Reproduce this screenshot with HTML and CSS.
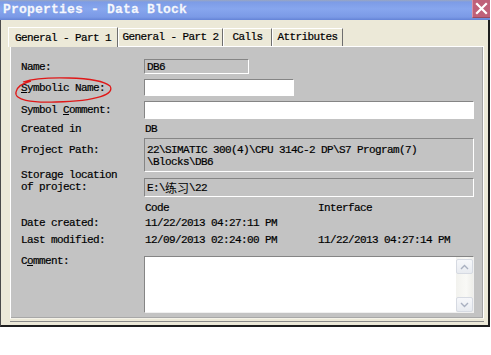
FILE: index.html
```html
<!DOCTYPE html>
<html lang="en">
<head>
<meta charset="UTF-8">
<title>Properties - Data Block</title>
<link rel="stylesheet" href="styles.css">
</head>
<body>
  <div class="window">
    <div class="titlebar">
      <div class="title">Properties - Data Block</div>
      <div class="close">
        <svg width="17" height="17" viewBox="0 0 17 17">
          <path d="M4 4 L13 13 M13 4 L4 13" stroke="#fff" stroke-width="2.2" stroke-linecap="square"/>
        </svg>
      </div>
    </div>
    <div class="frame">
      <div class="sheet">
        <div class="tabs">
          <div class="tab active w1">General - Part 1</div>
          <div class="tab w2">General - Part 2</div>
          <div class="tab w3">Calls</div>
          <div class="tab w4">Attributes</div>
        </div>
        <div class="panel">
          <svg class="mark" width="100" height="30" viewBox="0 0 100 30">
            <path d="M10 6 C28 0, 85 0, 97 10 C102 18, 85 25, 43 26 C18 27, 1 24, 3 16 C4 11, 10 7, 18 5" fill="none" stroke="#e01818" stroke-width="1.3"/>
          </svg>

          <div class="row r-name">
            <div class="label">Name:</div>
            <div class="field gray short">DB6</div>
          </div>
          <div class="row r-sym">
            <div class="label"><u>S</u>ymbolic Name:</div>
            <div class="field white mid"></div>
          </div>
          <div class="row r-comm">
            <div class="label">Symbol <u>C</u>omment:</div>
            <div class="field white full"></div>
          </div>
          <div class="row r-created">
            <div class="label">Created in</div>
            <div class="value">DB</div>
          </div>
          <div class="row r-path">
            <div class="label top">Project Path:</div>
            <div class="field gray full multi">22\SIMATIC 300(4)\CPU 314C-2 DP\S7 Program(7)<br>\Blocks\DB6</div>
          </div>
          <div class="row r-store">
            <div class="label two">Storage location<br>of project:</div>
            <div class="field gray full store">E:\<span class="cjk">练习</span>\22</div>
          </div>
          <div class="row r-code">
            <div class="label"></div>
            <div class="value cols"><span class="c1">Code</span><span>Interface</span></div>
          </div>
          <div class="row r-date">
            <div class="label">Date created:</div>
            <div class="value cols"><span class="c1">11/22/2013 04:27:11 PM</span><span></span></div>
          </div>
          <div class="row r-mod">
            <div class="label">Last modified:</div>
            <div class="value cols"><span class="c1">12/09/2013 02:24:00 PM</span><span>11/22/2013 04:27:14 PM</span></div>
          </div>
          <div class="row r-cmt">
            <div class="label cmt">C<u>o</u>mment:</div>
            <div class="textarea">
              <div class="scroll">
                <div class="sbtn">
                  <svg width="9" height="6" viewBox="0 0 9 6"><path d="M1 5 L4.5 1.5 L8 5" fill="none" stroke="#a9b0c0" stroke-width="1.4"/></svg>
                </div>
                <div class="sbtn">
                  <svg width="9" height="6" viewBox="0 0 9 6"><path d="M1 1 L4.5 4.5 L8 1" fill="none" stroke="#a9b0c0" stroke-width="1.4"/></svg>
                </div>
              </div>
            </div>
          </div>
        </div>
      </div>
    </div>
  </div>
</body>
</html>
```

FILE: styles.css
```css
body {
  margin: 0;
  background: #fff;
  font-family: "Liberation Mono", "DejaVu Sans Mono", monospace;
  font-size: 11px;
  letter-spacing: -0.6px;
  color: #000;
  -webkit-text-stroke: 0.2px #000;
}

.window {
  width: 491px;
}

.titlebar {
  height: 20px;
  width: 490px;
  display: flex;
  justify-content: space-between;
  align-items: flex-start;
  background: linear-gradient(180deg, #9aa6c0 0, #7d9ce6 2px, #87a6ee 45%, #7b9ae6 85%, #6483d6 100%);
}

.title {
  padding: 2px 0 0 3px;
  font-size: 13px;
  font-weight: bold;
  letter-spacing: 0.2px;
  line-height: 16px;
  color: #f4f7ff;
  -webkit-text-stroke: 0.3px #f4f7ff;
  text-shadow: 0 0 1px #5a78c8;
}

.close {
  width: 17px;
  height: 17px;
  background: #bf6079;
  border-left: 1px solid #d890a4;
  border-bottom: 1px solid #9a4a62;
}

.close svg {
  display: block;
}

.frame {
  box-sizing: border-box;
  width: 490px;
  height: 307px;
  background: #ece9d8;
  border-left: 1px solid #4a4a4a;
  border-right: 2px solid #1e1e1e;
  border-bottom: 2px solid #1e1e1e;
  padding: 7px 4px 3px 9px;
}

.sheet {
  border-bottom: 1px solid #8a8a8a;
  padding-bottom: 2px;
}

.tabs {
  display: flex;
  align-items: flex-end;
  height: 19px;
  margin-left: -2px;
}

.tab {
  box-sizing: border-box;
  height: 18px;
  line-height: 17px;
  text-align: center;
  background: #ece9d8;
  border-top: 1px solid #fff;
  border-left: 1px solid #fff;
  border-right: 1px solid #6e6e6e;
  position: relative;
}

.tab.active {
  height: 20px;
  line-height: 20px;
  margin-bottom: -1px;
  z-index: 1;
}

.w1 { width: 110px; }
.w2 { width: 105px; }
.w3 { width: 49px; }
.w4 { width: 71px; }

.panel {
  box-sizing: border-box;
  height: 273px;
  background: #c3c3c3;
  border-top: 1px solid #fff;
  border-left: 1px solid #fff;
  border-right: 1px solid #fff;
  border-bottom: 1px solid #f4f2e8;
  box-shadow: inset -1px 0 #a4a4a4, inset 0 -1px #a8a8a8;
  padding: 0 8px 0 10px;
  position: relative;
}

.mark {
  position: absolute;
  left: 2px;
  top: 29px;
}

.row {
  display: flex;
  align-items: center;
}

.label {
  width: 123px;
  flex: none;
  line-height: 12px;
  white-space: nowrap;
}

.label u {
  text-underline-offset: 1px;
}

.label.top {
  align-self: flex-start;
  margin-top: 6px;
}

.label.two {
  margin-top: -9px;
  align-self: flex-start;
}

.label.cmt {
  align-self: flex-start;
  margin-top: -1px;
}

.value {
  padding-left: 1px;
  line-height: 12px;
}

.cols {
  display: flex;
}

.cols .c1 {
  width: 173px;
}

.field {
  box-sizing: border-box;
  height: 100%;
  border-top: 1px solid #858585;
  border-left: 1px solid #858585;
  border-right: 1px solid #fff;
  border-bottom: 1px solid #fff;
  padding: 0 2px;
  line-height: 12px;
  display: flex;
  align-items: center;
}

.field.gray { background: #c3c3c3; }
.field.white { background: #fff; }
.short { width: 105px; }
.mid { width: 150px; }
.full { width: 330px; }

.field.multi {
  display: block;
  padding-top: 5px;
}

.cjk {
  font-family: "Noto Sans CJK SC", sans-serif;
  font-size: 12px;
  letter-spacing: 0;
  -webkit-text-stroke: 0;
}

.r-name { margin-top: 12px; height: 15px; }
.r-sym { margin-top: 5px; height: 17px; }
.r-comm { margin-top: 5px; height: 18px; }
.r-created { margin-top: 3px; height: 14px; }
.r-path { margin-top: 2px; height: 34px; align-items: stretch; }
.r-store { margin-top: 6px; height: 19px; }
.r-code { margin-top: 4px; height: 14px; }
.r-date { margin-top: 1px; height: 14px; }
.r-mod { margin-top: 3px; height: 14px; }
.r-cmt { margin-top: 9px; height: 57px; align-items: stretch; }

.textarea {
  box-sizing: border-box;
  width: 330px;
  background: #fff;
  border-top: 1px solid #858585;
  border-left: 1px solid #858585;
  border-right: 1px solid #f0f0f0;
  border-bottom: 1px solid #f0f0f0;
  display: flex;
  justify-content: flex-end;
}

.scroll {
  width: 17px;
  background: linear-gradient(90deg, #f2f2ee, #f9f9f6 60%, #eeeeea);
  display: flex;
  flex-direction: column;
  justify-content: space-between;
  padding: 2px 0 0 0;
}

.sbtn {
  box-sizing: border-box;
  height: 15px;
  border: 1px solid #d6dae2;
  border-radius: 2px;
  background: linear-gradient(180deg, #f6f7fa, #e8ebf0);
  display: flex;
  align-items: center;
  justify-content: center;
}
```
